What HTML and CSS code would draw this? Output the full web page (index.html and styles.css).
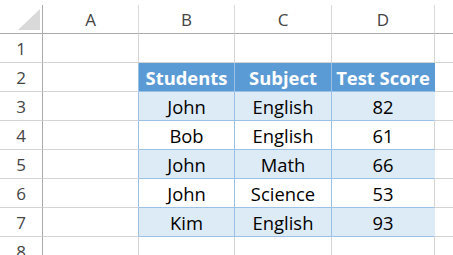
FILE: index.html
```html
<!DOCTYPE html>
<html>
<head>
<meta charset="utf-8">
<link rel="stylesheet" href="styles.css">
</head>
<body>
<div class="sheet">
  <div class="cell corner"><svg class="tri" width="22" height="21" viewBox="0 0 22 21"><polygon points="22,0 22,21 0,21" fill="#d9d9d9"/></svg></div>
  <div class="cell colhead">A</div>
  <div class="cell colhead">B</div>
  <div class="cell colhead">C</div>
  <div class="cell colhead">D</div>
  <div class="cell colhead last"></div>

  <div class="cell rowhead">1</div>
  <div class="cell"></div>
  <div class="cell"></div>
  <div class="cell"></div>
  <div class="cell"></div>
  <div class="cell last"></div>

  <div class="cell rowhead">2</div>
  <div class="cell edge"></div>
  <div class="cell th">Students</div>
  <div class="cell th">Subject</div>
  <div class="cell th endcol">Test Score</div>
  <div class="cell last"></div>

  <div class="cell rowhead">3</div>
  <div class="cell edge"></div>
  <div class="cell td band">John</div>
  <div class="cell td band">English</div>
  <div class="cell td band endcol">82</div>
  <div class="cell last"></div>

  <div class="cell rowhead">4</div>
  <div class="cell edge"></div>
  <div class="cell td">Bob</div>
  <div class="cell td">English</div>
  <div class="cell td endcol">61</div>
  <div class="cell last"></div>

  <div class="cell rowhead">5</div>
  <div class="cell edge"></div>
  <div class="cell td band">John</div>
  <div class="cell td band">Math</div>
  <div class="cell td band endcol">66</div>
  <div class="cell last"></div>

  <div class="cell rowhead">6</div>
  <div class="cell edge"></div>
  <div class="cell td">John</div>
  <div class="cell td">Science</div>
  <div class="cell td endcol">53</div>
  <div class="cell last"></div>

  <div class="cell rowhead">7</div>
  <div class="cell edge"></div>
  <div class="cell td band">Kim</div>
  <div class="cell td band">English</div>
  <div class="cell td band endcol">93</div>
  <div class="cell last"></div>

  <div class="cell rowhead">8</div>
  <div class="cell"></div>
  <div class="cell"></div>
  <div class="cell"></div>
  <div class="cell"></div>
  <div class="cell last"></div>
</div>
</body>
</html>
```

FILE: styles.css
```css
html, body {
  margin: 0;
  padding: 0;
  background: #ffffff;
  overflow: hidden;
}
body {
  padding-top: 5px;
  font-family: "Open Sans", "Noto Sans", sans-serif;
  color: #000;
}
.sheet {
  display: grid;
  grid-template-columns: 43px 96px 96px 97px 103px 1fr;
  grid-auto-rows: 29px;
}
.cell {
  box-sizing: border-box;
  border-right: 1px solid #d4d4d4;
  border-bottom: 1px solid #d4d4d4;
  display: flex;
  align-items: center;
  justify-content: center;
  font-size: 18.4px;
  white-space: nowrap;
  overflow: hidden;
}
.cell.last {
  border-right: none;
}
.corner {
  position: relative;
  border-right-color: #ababab;
  border-bottom-color: #ababab;
}
.tri {
  position: absolute;
  left: 18px;
  top: 4px;
}
.colhead {
  border-bottom-color: #ababab;
  border-right-color: #dadada;
  color: #444444;
  font-size: 17px;
}
.rowhead {
  border-right-color: #ababab;
  color: #444444;
  font-size: 17px;
}
.edge {
  border-right-color: #9bc2e6;
}
.th {
  background: #5b9bd5;
  color: #ffffff;
  font-weight: 700;
  border-right-color: #9bc2e6;
  border-bottom-color: #9bc2e6;
}
.th.endcol {
  border-right-color: #5b9bd5;
}
.td {
  border-right-color: #9bc2e6;
  border-bottom-color: #9bc2e6;
}
.td.endcol {
  border-right-color: #d4d4d4;
}
.band {
  background: #ddebf7;
}
.band.endcol {
  border-right-color: #ddebf7;
}
```
